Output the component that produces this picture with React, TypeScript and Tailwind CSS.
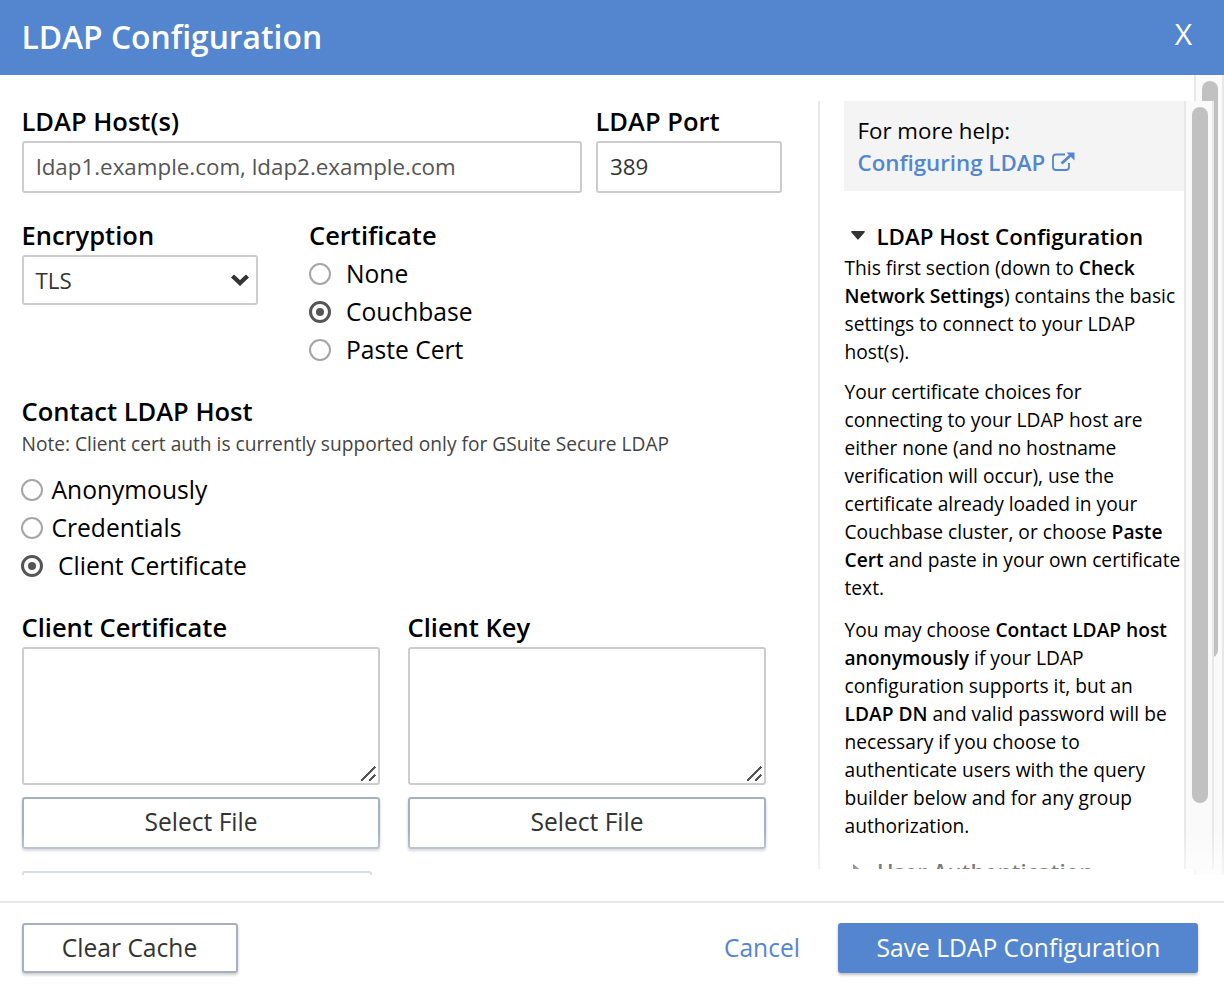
import React from "react";

type RadioProps = { label: string; checked?: boolean; gap: string };

function Radio({ label, checked, gap }: RadioProps) {
  return (
    <div className="flex h-[38px] items-center">
      <span
        className={
          checked
            ? "flex size-[22px] items-center justify-center rounded-full border-[3px] border-[#555]"
            : "flex size-[22px] items-center justify-center rounded-full border-2 border-[#a6a6a6]"
        }
      >
        {checked && <span className="size-2 rounded-full bg-[#555]" />}
      </span>
      <span className={gap}>{label}</span>
    </div>
  );
}

function Label({ children }: { children: React.ReactNode }) {
  return <div className="-ml-[0.5px] h-9 text-[25.5px] leading-9 font-semibold whitespace-nowrap">{children}</div>;
}

function FileField({ label }: { label: string }) {
  return (
    <div className="w-[358px]">
      <Label>{label}</Label>
      <div className="mt-[2px] flex h-[138px] items-end justify-end rounded-[3px] border-2 border-[#cdcdcd]">
        <svg width="18" height="18" viewBox="0 0 18 18" className="text-[#555]" shapeRendering="crispEdges">
          <path d="M1 16L15 2M9 16L15 10" stroke="currentColor" strokeWidth="1.5" fill="none" />
        </svg>
      </div>
      <button className="mt-3 flex h-[52px] w-full justify-center rounded-[3px] border-2 border-[#a5b1c0] text-[24.6px] leading-[46px] text-[#333] shadow-[0_2px_3px_rgba(0,0,0,0.2)]">
        Select File
      </button>
    </div>
  );
}

export default function App() {
  return (
    <div className="h-[990px] w-[1224px] overflow-hidden bg-white font-['Open_Sans','Noto_Sans',sans-serif] text-[24.6px] text-black">
      <header className="flex h-[75px] items-start justify-between bg-[#5386cf] pr-8 pl-[21.5px] text-white">
        <h1 className="text-[31.8px] leading-[73px] font-semibold">LDAP Configuration</h1>
        <span className="text-[30px] leading-[67px]">X</span>
      </header>

      <div className="relative h-[800px] overflow-hidden">
        <div className="absolute top-0 right-0 h-full w-[30px] border-x-2 border-[#e8e8e8] bg-[#fafafa] pt-1.5 pl-1.5">
          <div className="h-[577px] w-4 rounded-full bg-[#c1c1c1]" />
        </div>

        <div className="relative flex">
          <main className="w-[818px] shrink-0 pt-7 pl-[22px]">
            <div className="flex gap-[14px]">
              <div className="w-[560px]">
                <Label>LDAP Host(s)</Label>
                <div className="mt-[2px] h-[52px] rounded-[3px] border-2 border-[#cdcdcd] pl-3 text-[22.36px] leading-[48px] text-[#555]">
                  ldap1.example.com, ldap2.example.com
                </div>
              </div>
              <div className="w-[186px]">
                <Label>LDAP Port</Label>
                <div className="mt-[2px] h-[52px] rounded-[3px] border-2 border-[#cdcdcd] pl-3 text-[22.36px] leading-[48px] text-[#333]">
                  389
                </div>
              </div>
            </div>

            <div className="mt-6 flex">
              <div className="w-[287.5px]">
                <Label>Encryption</Label>
                <div className="mt-[2px] flex h-[50px] w-[236px] items-center justify-between rounded-[3px] border-2 border-[#cdcdcd] pr-1.5 pl-[11.5px] text-[22.36px] leading-[46px] text-[#333]">
                  <span className="pt-0.5">TLS</span>
                  <svg width="20" height="14" viewBox="0 0 20 14" className="text-[#333]">
                    <path d="M2.5 3L10 10L17.5 3" stroke="currentColor" strokeWidth="4.4" fill="none" />
                  </svg>
                </div>
              </div>
              <div>
                <Label>Certificate</Label>
                <div className="-ml-[0.5px] pt-0.5">
                  <Radio label="None" gap="ml-[15px]" />
                  <Radio label="Couchbase" checked gap="ml-[15px]" />
                  <Radio label="Paste Cert" gap="ml-[15px]" />
                </div>
              </div>
            </div>

            <div className="mt-6">
              <Label>Contact LDAP Host</Label>
              <p className="-ml-[0.5px] h-7 pt-px text-[19.17px] leading-7 whitespace-nowrap text-[#444]">
                Note: Client cert auth is currently supported only for GSuite Secure LDAP
              </p>
              <div className="-ml-px pt-[14px]">
                <Radio label="Anonymously" gap="ml-[8.5px]" />
                <Radio label="Credentials" gap="ml-[8.5px]" />
                <Radio label="Client Certificate" checked gap="ml-[15px]" />
              </div>
            </div>

            <div className="mt-6 flex gap-7">
              <FileField label="Client Certificate" />
              <FileField label="Client Key" />
            </div>
            <div className="mt-[22px] h-[50px] w-[350px] rounded-[3px] border-2 border-[#a5b1c0]" />
          </main>

          <aside className="mt-[26px] flex h-[768px] w-[396px] shrink-0 overflow-hidden border-l-2 border-[#e8e8e8] bg-white pl-6">
            <div className="w-[340px] shrink-0">
              <div className="h-[90px] bg-[#f4f4f4] pt-[14px] pl-[13.5px] text-[22.3px] leading-8 whitespace-nowrap">
                <div>For more help:</div>
                <div className="flex items-center font-semibold text-[#5386cf]">
                  Configuring LDAP
                  <svg width="24" height="22" viewBox="0 0 24 22" className="mb-[3px] ml-1.5">
                    <path
                      d="M14 3.5H5Q2 3.5 2 6.5V16Q2 19 5 19H15Q18 19 18 16V12"
                      stroke="currentColor"
                      strokeWidth="1.8"
                      fill="none"
                    />
                    <path d="M10.5 12.5L20 4" stroke="currentColor" strokeWidth="2.8" />
                    <path d="M15.5 1.5H23.5V9.5Z" fill="currentColor" />
                  </svg>
                </div>
              </div>
              <div className="mt-[30px] flex h-8 items-center text-[22.3px] leading-8 font-semibold whitespace-nowrap">
                <svg width="14" height="9" viewBox="0 0 14 9" className="mr-[12px] mb-[3px] ml-[6.5px] text-[#333]">
                  <path d="M1 0H13Q14.5 0.3 13.5 1.5L7.6 8.3Q7 9 6.4 8.3L0.5 1.5Q-0.5 0.3 1 0Z" fill="currentColor" />
                </svg>
                LDAP Host Configuration
              </div>
              <div className="pl-[0.5px] text-[19.18px] leading-7 whitespace-nowrap">
                <p className="mt-px">
                  This first section (down to <b className="font-semibold">Check<br />Network Settings</b>) contains the basic<br />
                  settings to connect to your LDAP<br />host(s).
                </p>
                <p className="mt-3">
                  Your certificate choices for<br />connecting to your LDAP host are<br />either none (and no hostname<br />
                  verification will occur), use the<br />certificate already loaded in your<br />Couchbase cluster, or choose{" "}
                  <b className="font-semibold">Paste<br />Cert</b> and paste in your own certificate<br />text.
                </p>
                <p className="mt-[14px]">
                  You may choose <b className="font-semibold">Contact LDAP host<br />anonymously</b> if your LDAP<br />
                  configuration supports it, but an<br /><b className="font-semibold">LDAP DN</b> and valid password will be<br />
                  necessary if you choose to<br />authenticate users with the query<br />builder below and for any group<br />
                  authorization.
                </p>
              </div>
              <div className="mt-4 flex h-8 items-center text-[22.3px] leading-8 font-semibold whitespace-nowrap">
                <svg width="9" height="14" viewBox="0 0 9 14" className="mr-[15px] mb-[3px] ml-[9px] text-[#333]">
                  <path d="M0 0V14L9 7Z" fill="currentColor" />
                </svg>
                User Authentication
              </div>
            </div>
            <div className="w-[30px] shrink-0 border-x-2 border-[#e8e8e8] bg-[#fafafa] pt-1.5 pl-1.5">
              <div className="h-[696px] w-4 rounded-full bg-[#c1c1c1]" />
            </div>
          </aside>
        </div>
        <div className="absolute inset-x-0 bottom-0 h-[44px] bg-linear-to-b from-white/0 to-white/60" />
      </div>

      <footer className="mt-[26px] flex h-[89px] items-start border-t-2 border-[#e8e8e8] pt-5 pl-[22px]">
        <button className="flex h-[50px] w-[216px] justify-center rounded-[3px] border-2 border-[#a5b1c0] pr-px text-[24.6px] leading-[46px] text-[#333] shadow-[0_2px_3px_rgba(0,0,0,0.2)]">
          Clear Cache
        </button>
        <a className="ml-auto leading-[49px] text-[#5386cf]">Cancel</a>
        <button className="mr-[26px] ml-[38px] flex h-[50px] w-[360px] justify-center rounded-[3px] bg-[#5386cf] pl-px text-[24.6px] leading-[49px] text-white shadow-[0_2px_3px_rgba(0,0,0,0.25)]">
          Save LDAP Configuration
        </button>
      </footer>
    </div>
  );
}
